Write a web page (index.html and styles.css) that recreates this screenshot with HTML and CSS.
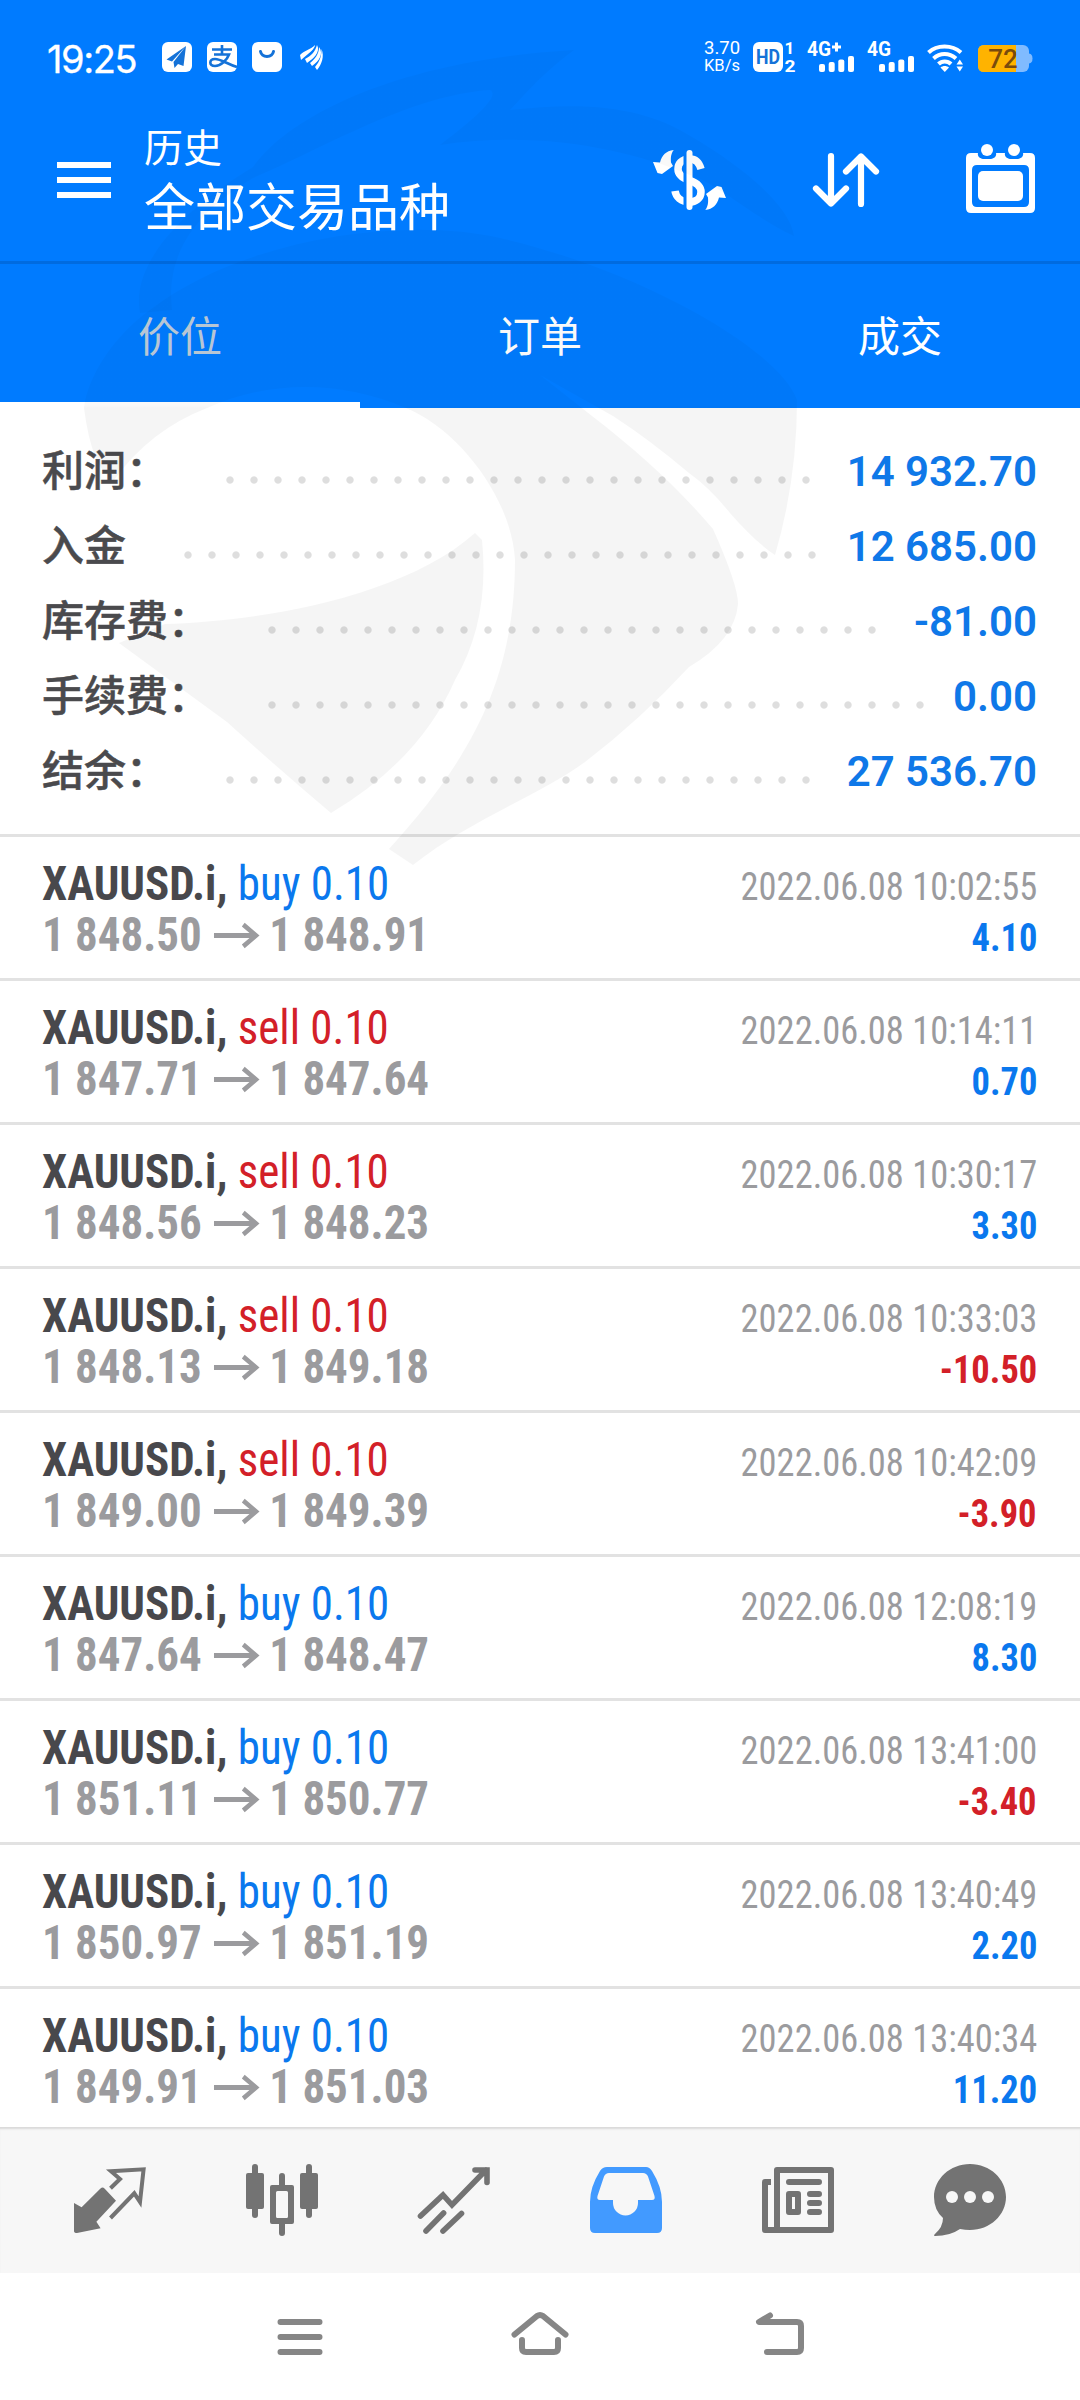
FILE: index.html
```html
<!DOCTYPE html>
<html lang="zh-CN">
<head>
<meta charset="utf-8">
<title>历史</title>
<link rel="stylesheet" href="styles.css">
</head>
<body>
<div class="screen">
  <div class="top">
    <div class="status">
      <span class="clock">19:25</span>
      <svg class="app" width="30" height="30" viewBox="0 0 30 30"><rect width="30" height="30" rx="6" fill="#fff"/><path d="M24 4 4.500 17.500 10 19.500Z M24 4 11.500 20 12.500 26 16 22 21.500 24Z" fill="#1472d8"/></svg>
      <svg class="app" width="30" height="30" viewBox="0 0 30 30"><rect width="30" height="30" rx="6" fill="#fff"/><path d="M5 7.500H25M15 3V12.500M7 12.500H22C20 18 14 24 8 24C1.500 24 2 17 8 17C14 17 20 22 30 25" fill="none" stroke="#1472d8" stroke-width="2.600"/></svg>
      <svg class="app" width="30" height="30" viewBox="0 0 30 30"><rect width="30" height="30" rx="6" fill="#fff"/><path d="M8.500 9.500C10 16 20 16 21.500 9.500" fill="none" stroke="#1472d8" stroke-width="3" stroke-linecap="round"/></svg>
      <svg class="wing" width="24" height="26" viewBox="0 0 24 26" fill="#fff"><path d="M0 11C5 6 10 6 15 1C15 5 9 9 1 16Z"/><path d="M5 15C11 12 15 8 17 1C21 8 13 15 7 19Z"/><path d="M10 19C15 15 19 10 19 3C24 10 19 17 12 22Z"/><path d="M15 23C20 17 21.500 12 21.500 5C24.500 12 22 20 17 26Z"/></svg>
      <span class="rate"><span>3.70</span><span class="unit">KB/s</span></span>
      <svg class="hd" width="44" height="30" viewBox="0 0 44 30"><rect width="30" height="30" rx="6" fill="#fff"/><text x="15" y="22" class="hd-text" text-anchor="middle" textLength="24" lengthAdjust="spacingAndGlyphs">HD</text><text x="36.500" y="12" class="sim" text-anchor="middle">1</text><text x="37" y="30" class="sim" text-anchor="middle" textLength="11" lengthAdjust="spacingAndGlyphs">2</text></svg>
      <svg class="cell" width="48" height="32" viewBox="0 0 48 32"><text x="0" y="15" class="net" textLength="24" lengthAdjust="spacingAndGlyphs">4G</text><path d="M25 6H34M29.500 1.500V10.500" stroke="#fff" stroke-width="3"/><g fill="#fff"><rect x="12" y="23" width="6" height="8" rx="2"/><rect x="21.700" y="21" width="6" height="10" rx="2"/><rect x="31.300" y="18.500" width="6" height="12.500" rx="2"/><rect x="41" y="15" width="6" height="16" rx="2"/></g></svg>
      <svg class="cell cell2" width="48" height="32" viewBox="0 0 48 32"><text x="0" y="15" class="net" textLength="24" lengthAdjust="spacingAndGlyphs">4G</text><g fill="#fff"><rect x="12" y="23" width="6" height="8" rx="2"/><rect x="21.700" y="21" width="6" height="10" rx="2"/><rect x="31.300" y="18.500" width="6" height="12.500" rx="2"/><rect x="41" y="15" width="6" height="16" rx="2"/></g></svg>
      <svg class="wifi" width="37" height="28" viewBox="0 0 37 28"><g fill="none" stroke="#fff" stroke-width="4"><path d="M1.500 8.500C10 .5 25 .5 34 8.500"/><path d="M6.500 14.500C13 8.500 22 8.500 29 14.500"/><path d="M11.500 20C15 16.500 20.500 16.500 24 20"/></g><path d="M13.500 23.500C16 21.500 19.500 21.500 22 23.500L17.800 28ZM29.500 20.500 32.800 15.500 36 20.500ZM29.500 22.500H36L32.800 27.500Z" fill="#fff"/></svg>
      <svg class="battery" width="55" height="27" viewBox="0 0 55 27"><rect width="51" height="27" rx="6" fill="#80bbff"/><path d="M51 8.500Q54.500 9 54.500 13.500T51 18.500Z" fill="#80bbff"/><path d="M6 0H38V27H6Q0 27 0 21V6Q0 0 6 0Z" fill="#ffb300"/><text x="25" y="22.500" text-anchor="middle" class="charge">72</text></svg>
    </div>
    <div class="header">
      <svg width="54" height="36" viewBox="0 0 54 36" fill="#fff"><path d="M0 0H54V6H0ZM0 15H54V21H0ZM0 30H54V36H0Z"/></svg>
      <div class="titles"><div class="sub">历史</div><div class="title">全部交易品种</div></div>
      <div class="tools">
        <svg width="73" height="60" viewBox="0 0 73 60"><path d="M48 19C46 12 42 9 37 9C28 9 25 14 25 19C25 26 32 29 37 30.500C44 33 48 36 48 42C48 48 43 52 36 52C28 52 23 47 22 41" fill="none" stroke="#fff" stroke-width="7.500"/><path d="M30.500 2H34V58H30.500Z" fill="#007bff"/><rect x="33.500" width="6" height="60" rx="3" fill="#fff"/><g fill="#fff"><path id="swirl" d="M20.700 0C17 5 18 10 18 12.500L20 16L9 24L4.500 23L0 12L7 12.500C9 5 13 1 20.700 0Z"/><use href="#swirl" transform="rotate(180 36.500 30)"/></g></svg>
        <svg width="66" height="54" viewBox="0 0 66 54" fill="none" stroke="#fff" stroke-width="6.200" stroke-linecap="round" stroke-linejoin="round"><path d="M18 3V50M3 35.500 18 50.500 33 35.500M48 51V3.500M33 18.500 48 3.500 63 18.500"/></svg>
        <svg class="calendar" width="69" height="69" viewBox="0 0 69 69"><path fill="#fff" fill-rule="evenodd" d="M5 9H12C11 13 15 15 18 15H24C27 15 31 13 30 9H39C38 13 42 15 45 15H51C54 15 58 13 57 9H64Q69 9 69 14V64Q69 69 64 69H5Q0 69 0 64V14Q0 9 5 9ZM11 21Q6 21 6 26V58Q6 63 11 63H58Q63 63 63 58V26Q63 21 58 21Z"/><rect x="12" y="27" width="45" height="30" rx="5" fill="#fff"/><circle cx="21" cy="6" r="6" fill="#fff"/><circle cx="48" cy="6" r="6" fill="#fff"/></svg>
      </div>
    </div>
    <div class="tabs"><div class="tab active">价位</div><div class="tab">订单</div><div class="tab">成交</div></div>
  </div>

  <div class="summary">
    <div class="line"><span>利润：</span><i class="dots"></i><b>14 932.70</b></div>
    <div class="line"><span>入金</span><i class="dots"></i><b>12 685.00</b></div>
    <div class="line"><span>库存费：</span><i class="dots"></i><b>-81.00</b></div>
    <div class="line"><span>手续费：</span><i class="dots"></i><b>0.00</b></div>
    <div class="line"><span>结余：</span><i class="dots"></i><b>27 536.70</b></div>
  </div>

  <div class="deals">
    <div class="deal"><div class="row"><div class="symbol">XAUUSD.i, <span class="buy">buy 0.10</span></div><div class="date">2022.06.08 10:02:55</div></div><div class="row"><div class="price">1 848.50<svg class="to" viewBox="0 0 46 24"><path d="M0 12H43M30 1.500 43 12 30 22.500"/></svg>1 848.91</div><div class="profit">4.10</div></div></div>
    <div class="deal"><div class="row"><div class="symbol">XAUUSD.i, <span class="sell">sell 0.10</span></div><div class="date">2022.06.08 10:14:11</div></div><div class="row"><div class="price">1 847.71<svg class="to" viewBox="0 0 46 24"><path d="M0 12H43M30 1.500 43 12 30 22.500"/></svg>1 847.64</div><div class="profit">0.70</div></div></div>
    <div class="deal"><div class="row"><div class="symbol">XAUUSD.i, <span class="sell">sell 0.10</span></div><div class="date">2022.06.08 10:30:17</div></div><div class="row"><div class="price">1 848.56<svg class="to" viewBox="0 0 46 24"><path d="M0 12H43M30 1.500 43 12 30 22.500"/></svg>1 848.23</div><div class="profit">3.30</div></div></div>
    <div class="deal"><div class="row"><div class="symbol">XAUUSD.i, <span class="sell">sell 0.10</span></div><div class="date">2022.06.08 10:33:03</div></div><div class="row"><div class="price">1 848.13<svg class="to" viewBox="0 0 46 24"><path d="M0 12H43M30 1.500 43 12 30 22.500"/></svg>1 849.18</div><div class="profit loss">-10.50</div></div></div>
    <div class="deal"><div class="row"><div class="symbol">XAUUSD.i, <span class="sell">sell 0.10</span></div><div class="date">2022.06.08 10:42:09</div></div><div class="row"><div class="price">1 849.00<svg class="to" viewBox="0 0 46 24"><path d="M0 12H43M30 1.500 43 12 30 22.500"/></svg>1 849.39</div><div class="profit loss">-3.90</div></div></div>
    <div class="deal"><div class="row"><div class="symbol">XAUUSD.i, <span class="buy">buy 0.10</span></div><div class="date">2022.06.08 12:08:19</div></div><div class="row"><div class="price">1 847.64<svg class="to" viewBox="0 0 46 24"><path d="M0 12H43M30 1.500 43 12 30 22.500"/></svg>1 848.47</div><div class="profit">8.30</div></div></div>
    <div class="deal"><div class="row"><div class="symbol">XAUUSD.i, <span class="buy">buy 0.10</span></div><div class="date">2022.06.08 13:41:00</div></div><div class="row"><div class="price">1 851.11<svg class="to" viewBox="0 0 46 24"><path d="M0 12H43M30 1.500 43 12 30 22.500"/></svg>1 850.77</div><div class="profit loss">-3.40</div></div></div>
    <div class="deal"><div class="row"><div class="symbol">XAUUSD.i, <span class="buy">buy 0.10</span></div><div class="date">2022.06.08 13:40:49</div></div><div class="row"><div class="price">1 850.97<svg class="to" viewBox="0 0 46 24"><path d="M0 12H43M30 1.500 43 12 30 22.500"/></svg>1 851.19</div><div class="profit">2.20</div></div></div>
    <div class="deal"><div class="row"><div class="symbol">XAUUSD.i, <span class="buy">buy 0.10</span></div><div class="date">2022.06.08 13:40:34</div></div><div class="row"><div class="price">1 849.91<svg class="to" viewBox="0 0 46 24"><path d="M0 12H43M30 1.500 43 12 30 22.500"/></svg>1 851.03</div><div class="profit">11.20</div></div></div>
  </div>

  <div class="nav">
    <svg viewBox="0 0 72 72"><path d="M0 39 7.600 43.300 26.500 24.500Q28.600 22.700 30.500 24.500L42 36.700 22.400 57.700 26.600 64.300 3 69Q0 69 0 67Z" fill="#737373"/><path d="M36.500 24.300 46 15 37 7.300 69.600 5.300 66 38 60.300 29.300 36.500 54" fill="none" stroke="#737373" stroke-width="4"/></svg>
    <svg viewBox="0 0 72 72"><g fill="#737373"><rect y="9" width="18" height="36" rx="2"/><rect x="6" width="6" height="54" rx="3"/><rect x="54" y="9" width="18" height="36" rx="2"/><rect x="60" width="6" height="54" rx="3"/><path d="M33 12A3 3 0 0 1 39 12V21H46Q48 21 48 23V58Q48 60 46 60H39V69A3 3 0 0 1 33 69V60H26Q24 60 24 58V23Q24 21 26 21H33ZM30 28.500V52.500Q30 54 31.500 54H40.500Q42 54 42 52.500V28.500Q42 27 40.500 27H31.500Q30 27 30 28.500Z"/></g></svg>
    <svg viewBox="0 0 72 72"><path d="M2.500 52 25 31 34 41 68 6M57 6H69V18.500M8 67 25.600 49M25 67 43.500 49.500" fill="none" stroke="#737373" stroke-width="5.600" stroke-linecap="round"/></svg>
    <svg viewBox="0 0 72 72"><path fill="#429aff" fill-rule="evenodd" d="M17 3H56Q59.500 3 62 7Q72 23 72 38V64Q72 69 67 69H5Q0 69 0 64V38Q0 23 10 7Q12.500 3 17 3ZM19 9Q15.500 9 14 12.500L7.500 32Q6.500 36 10 36H23V39A12.500 12.500 0 0 0 48 39V36H62Q65.500 36 64.500 32L58 12.500Q56.500 9 53 9Z"/></svg>
    <svg viewBox="0 0 72 72"><g fill="none" stroke="#737373" stroke-width="6" stroke-linejoin="round"><path d="M15 6H69V66H15ZM9 18H3V66H15"/><path d="M27 18H57M48 30H57M48 39H57M48 48H57" stroke-linecap="round"/><rect x="27" y="30" width="9" height="18"/></g></svg>
    <svg viewBox="0 0 72 72"><path d="M36 0C56 0 72 15 72 33C72 51 56 66 36 66Q31 66 26 65Q16 72 1 72Q-1 71.500 1 70Q9 63 9 54Q0 46 0 33C0 15 16 0 36 0Z" fill="#737373"/><g fill="#f7f7f7"><circle cx="18" cy="33" r="6"/><circle cx="36" cy="33" r="6"/><circle cx="54" cy="33" r="6"/></g></svg>
  </div>

  <div class="system">
    <svg viewBox="0 0 60 60"><path d="M10.500 15H49.500M10.500 30H49.500M10.500 45H49.500"/></svg>
    <svg viewBox="0 0 60 60"><path d="M4.500 27.500 27 9Q30 7 33 9L55.500 27.500M12 33V41Q12 45 16 45H44Q48 45 48 41V33"/></svg>
    <svg viewBox="0 0 60 60"><path d="M20 8.500 9 15H47Q51 15 51 19V41Q51 45 47 45H17"/></svg>
  </div>

  <svg class="watermark" width="1080" height="900" viewBox="0 0 1080 900">
    <linearGradient id="tint" gradientUnits="userSpaceOnUse" x1="0" y1="0" x2="0" y2="900"><stop offset=".45" stop-opacity=".024"/><stop offset=".4533" stop-opacity=".04"/></linearGradient>
    <g fill="url(#tint)">
    <path d="M84 408C88 375 115 335 150 310C240 240 400 215 500 238C640 270 780 350 797 400Q797 480 775 555C760 545 745 530 730 513Q710 488 689 473Q650 440 613 416L540 375L592 416C640 453 680 490 713 529Q738 585 738 604Q735 640 689 667Q640 720 585 762C540 795 470 820 413 865L389 849C470 760 515 680 515 560C512 500 460 430 406 408C340 380 270 380 207 408Q150 430 114 480Q92 470 84 408Z"/>
    <path d="M482 540Q490 620 455 680Q420 760 331 813Q280 770 227 722L119 643 165 624C250 622 400 600 475 533Z"/>
    <path d="M140 313C130 260 190 205 253 167C290 115 400 60 574 50C540 75 520 100 510 110C595 100 650 110 692 137C740 165 790 205 794 236C750 215 720 185 690 175C630 150 540 130 440 145C480 115 500 95 490 90C410 95 320 150 253 178C200 210 165 250 172 310Z"/>
    </g>
  </svg>
</div>
</body>
</html>
```
FILE: styles.css
```css
* { box-sizing: border-box; }
body {
  margin: 0;
  background: #fff;
  font-family: Roboto, "Noto Sans CJK SC", sans-serif;
}
svg { display: block; flex: none; overflow: visible; }
.screen {
  position: relative;
  width: 1080px;
  height: 2400px;
  overflow: hidden;
  display: flex;
  flex-direction: column;
  background: #fff;
}
.top { flex: none; height: 408px; background: #007bff; color: #fff; }

/* status bar */
.status { display: flex; align-items: center; height: 114px; padding: 0 47px 0 47px; }
.clock { width: 100px; font: 400 38px/40px Inter, sans-serif; letter-spacing: -1.4px; margin-top: 4px; -webkit-text-stroke: .3px #fff; }
.app { margin-left: 15px; }
.wing { margin-left: 18px; }
.rate { display: flex; flex-direction: column; width: 42px; margin-left: auto; font-size: 18.5px; line-height: 17px; }
.rate .unit { font-size: 16.500px; }
.hd { margin-left: 7px; }
.hd-text { font: 700 20px Roboto, sans-serif; fill: #1472d8; }
.sim { font: 700 17px Roboto, sans-serif; fill: #fff; }
.net { font: 700 20px Roboto, sans-serif; fill: #fff; }
.cell { margin-left: 10px; }
.cell2 { margin-left: 12px; }
.wifi { margin-left: 12px; margin-top: 2px; }
.battery { margin-left: 14px; margin-top: 3px; }
.charge { font: 500 26px Roboto, sans-serif; fill: #7a4b0c; }

/* title bar */
.header { display: flex; align-items: center; height: 147px; padding: 0 45px 15px 57px; }
.titles { margin-left: 33px; margin-bottom: 2px; line-height: 60px; }
.sub { font-size: 39px; }
.title { font-size: 51px; }
.tools { display: flex; align-items: center; gap: 87px; margin-left: auto; }
.calendar { margin-bottom: 3px; }

.tabs { display: flex; height: 147px; border-top: 3px solid #006be0; }
.tab { flex: 1; text-align: center; font-size: 42px; line-height: 148px; }
.tab.active { color: #bccbd9; border-bottom: 6px solid #fff; }

/* totals */
.summary { flex: none; height: 426px; padding: 26px 43px 0 42px; }
.line { display: flex; align-items: center; height: 75px; color: #4a4a4d; font-size: 42px; font-weight: 500; line-height: 75px; }
.line span { -webkit-text-stroke: .5px #4a4a4d; }
.line b { color: #0f78e8; font-weight: 600; }
.dots {
  flex: 1;
  height: 8px;
  margin: 17px 27px 0 58px;
  background: radial-gradient(circle at 4px 4px, #dedede 3.2px, transparent 4.1px) 0 0 / 24px 8px repeat-x;
}

/* closed positions */
.deals { flex: none; height: 1293px; overflow: hidden; font-family: "Roboto Condensed", sans-serif; }
.deal { height: 144px; border-top: 3px solid #e2e2e2; padding: 21px 43px 0 42px; }
.row { display: flex; justify-content: space-between; height: 51px; line-height: 51px; align-items: baseline; }
.symbol, .price { font-size: 48px; font-weight: 700; transform: scaleX(.937); transform-origin: left; }
.symbol { color: #48484c; white-space: pre; }
.symbol span { font-weight: 400; }
.buy { color: #0a78ee; }
.sell { color: #d32028; }
.date, .profit { font-size: 39px; transform: scaleX(.935); transform-origin: right; }
.date { color: #9b9b9e; }
.price { display: flex; align-items: center; color: #9b9b9e; }
.to { width: 49px; height: 25px; margin: 1px 11px 0 12px; fill: none; stroke: #9b9b9e; stroke-width: 4.600; }
.profit { font-weight: 700; color: #0a78ee; }
.profit.loss { color: #d32028; }

/* bottom navigation */
.nav { flex: none; display: flex; align-items: center; gap: 100px; height: 146px; padding: 0 74px; background: #f7f7f7; box-shadow: inset 0 3px 2px -1px #dadada; }
.nav svg { width: 72px; height: 72px; }

.system { display: flex; justify-content: center; gap: 180px; height: 127px; padding-top: 34px; }
.system svg { width: 60px; height: 60px; fill: none; stroke: #868686; stroke-width: 6; stroke-linecap: round; stroke-linejoin: round; }

.watermark { position: absolute; left: 0; top: 0; pointer-events: none; }
```
